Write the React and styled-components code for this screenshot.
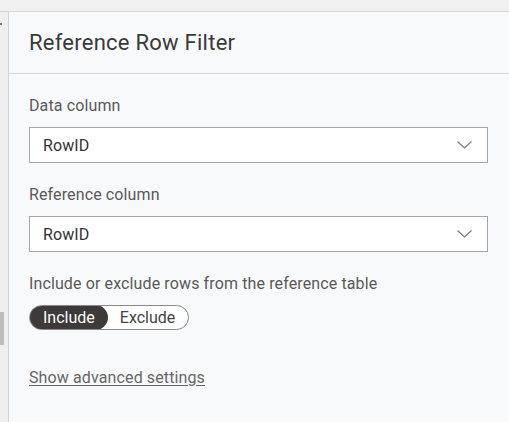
import React from "react";
import styled, { createGlobalStyle } from "styled-components";

const Global = createGlobalStyle`
  html, body { margin: 0; padding: 0; height: 100%; }
  body { font-family: Roboto, "Noto Sans", sans-serif; background: #f0f0f1; }
  #root { height: 100%; }
`;

const Page = styled.div`
  display: flex;
  flex-direction: column;
  height: 422px;
  width: 509px;
  overflow: hidden;
`;

const TopStrip = styled.div`
  height: 11px;
  background: #f0f0f1;
  border-bottom: 1px solid #d4d4d6;
  flex: none;
`;

const Body = styled.div`
  display: flex;
  flex: 1;
  min-height: 0;
`;

const SideRail = styled.div`
  position: relative;
  width: 8px;
  flex: none;
  background: #efefef;
  border-right: 1px solid #d4d4d6;
`;

const RailMark = styled.div`
  position: absolute;
  left: 0;
  top: 11px;
  width: 2px;
  height: 2px;
  background: #777;
`;

const RailThumb = styled.div`
  position: absolute;
  left: 0;
  top: 300px;
  width: 4px;
  height: 33px;
  background: #bdbdbd;
`;

const Panel = styled.div`
  flex: 1;
  background: #f8f9fa;
  display: flex;
  flex-direction: column;
`;

const Header = styled.div`
  height: 62px;
  box-sizing: border-box;
  border-bottom: 1px solid #d6d6d8;
  display: flex;
  align-items: center;
  padding-left: 20px;
  padding-bottom: 1px;
  font-size: 22px;
  letter-spacing: 0.25px;
  color: #3a3a3a;
`;

const Content = styled.div`
  padding: 22px 21px 0 20px;
  display: flex;
  flex-direction: column;
`;

const Label = styled.div`
  font-size: 16px;
  line-height: 20px;
  letter-spacing: 0.12px;
  color: #595959;
  margin-bottom: 11px;
`;

const Select = styled.div`
  height: 36px;
  box-sizing: border-box;
  border: 1px solid #a6a6a6;
  background: #fff;
  display: flex;
  align-items: center;
  justify-content: space-between;
  padding: 0 15px 0 13px;
  font-size: 16px;
  letter-spacing: 0.12px;
  color: #333;
  margin-bottom: 22px;
`;

const Toggle = styled.div`
  display: inline-flex;
  align-self: flex-start;
  height: 25px;
  box-sizing: border-box;
  border: 1px solid #8a8a8a;
  border-radius: 13px;
  background: #fff;
  margin-bottom: 38px;
  overflow: hidden;
`;

const ToggleOption = styled.div`
  display: flex;
  align-items: center;
  font-size: 16px;
  padding: ${(p) => (p.$active ? "0 13px 0 14px" : "0 13px 0 13px")};
  border-radius: 13px;
  background: ${(p) => (p.$active ? "#3e3a39" : "transparent")};
  color: ${(p) => (p.$active ? "#fff" : "#444")};
  margin: -1px 0 -1px -1px;
`;

const Link = styled.a`
  font-size: 16px;
  line-height: 20px;
  letter-spacing: 0.12px;
  color: #666;
  text-decoration: underline;
  text-underline-offset: 2px;
  align-self: flex-start;
`;

const Chevron = () => (
  <svg width="15" height="8" viewBox="0 0 15 8" fill="none">
    <path d="M0.5 0.5 L7.5 7 L14.5 0.5" stroke="#777" strokeWidth="1.1" />
  </svg>
);

export default function App() {
  return (
    <>
      <Global />
      <Page>
        <TopStrip />
        <Body>
          <SideRail>
            <RailMark />
            <RailThumb />
          </SideRail>
          <Panel>
            <Header>Reference Row Filter</Header>
            <Content>
              <Label>Data column</Label>
              <Select>
                <span>RowID</span>
                <Chevron />
              </Select>
              <Label>Reference column</Label>
              <Select>
                <span>RowID</span>
                <Chevron />
              </Select>
              <Label>Include or exclude rows from the reference table</Label>
              <Toggle>
                <ToggleOption $active>Include</ToggleOption>
                <ToggleOption>Exclude</ToggleOption>
              </Toggle>
              <Link>Show advanced settings</Link>
            </Content>
          </Panel>
        </Body>
      </Page>
    </>
  );
}
